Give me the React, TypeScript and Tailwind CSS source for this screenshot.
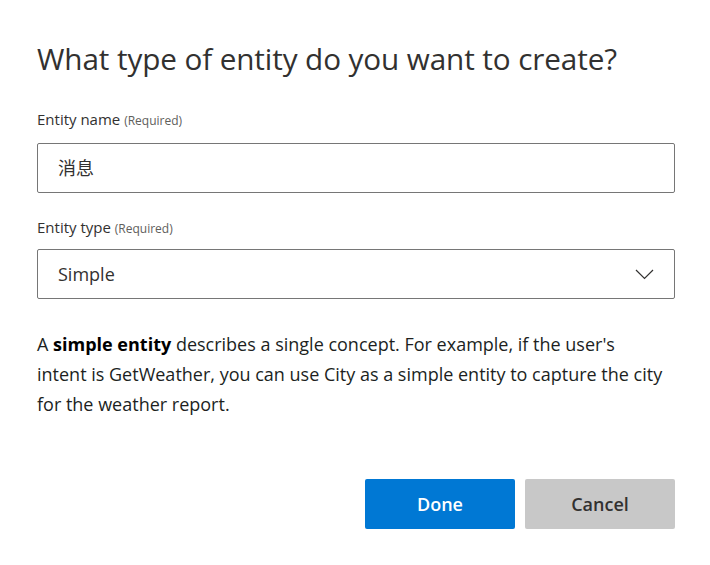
import React from "react";

const font = { fontFamily: '"Open Sans", "Noto Sans CJK SC", sans-serif' };

export default function App() {
  return (
    <div className="w-[710px] h-[565px] bg-white text-[#323130]" style={font}>
      <div className="flex flex-col pl-[37px] pr-[35px] pt-[39px]">
        <h1 className="text-[29.7px] leading-[40px] font-normal text-[#323130] tracking-[-0.1px]">
          What type of entity do you want to create?
        </h1>
        <label className="mt-[30px] text-[15px] leading-[20px] text-[#323130]">
          Entity name <span className="text-[12px] text-[#605e5c]">(Required)</span>
        </label>
        <div className="mt-[12px] h-[50px] border border-[#767676] rounded-[2px] flex items-center pl-[20px] text-[18px] text-[#323130]">
          消息
        </div>
        <label className="mt-[24px] text-[15px] leading-[20px] text-[#323130]">
          Entity type <span className="text-[12px] text-[#605e5c]">(Required)</span>
        </label>
        <div className="mt-[10px] h-[50px] border border-[#767676] rounded-[2px] flex items-center justify-between pl-[20px] pr-[20px] text-[18px] text-[#323130]">
          <span>Simple</span>
          <svg width="19" height="11" viewBox="0 0 19 11" fill="none">
            <polyline points="1,1 9.5,9.5 18,1" stroke="#323130" strokeWidth="1.2" />
          </svg>
        </div>
        <p className="mt-[30px] text-[18px] leading-[30px] text-[#201f1e]">
          A <b className="font-bold text-black">simple entity</b> describes a single concept. For example, if the user's
          <br />
          intent is GetWeather, you can use City as a simple entity to capture the city
          <br />
          for the weather report.
        </p>
        <div className="mt-[60px] flex justify-end gap-[10px]">
          <button className="w-[150px] h-[50px] rounded-[2px] bg-[#0078d4] text-white text-[18px] font-semibold">
            Done
          </button>
          <button className="w-[150px] h-[50px] rounded-[2px] bg-[#c8c8c8] text-[#323130] text-[18px] font-semibold">
            Cancel
          </button>
        </div>
      </div>
    </div>
  );
}
